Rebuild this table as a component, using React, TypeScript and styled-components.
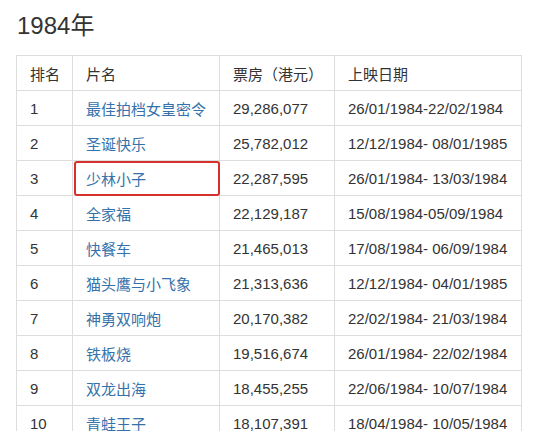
import styled, { createGlobalStyle } from 'styled-components'

const GlobalStyle = createGlobalStyle`
  html, body {
    margin: 0;
    background: #fff;
  }
  body {
    font-family: 'Liberation Sans', 'Noto Sans CJK SC', sans-serif;
    color: #333;
  }
`

const Page = styled.div`
  padding: 11px 0 0 16px;
  width: 525px;
  box-sizing: border-box;
`

const Title = styled.h2`
  margin: 0 0 14px 1px;
  font-size: 24px;
  line-height: 30px;
  font-weight: 400;
  color: #333;
`

const Table = styled.table`
  border-collapse: collapse;
  table-layout: fixed;
  width: 505px;
  font-size: 15px;
`

const Cell = styled.td`
  position: relative;
  height: 34px;
  padding: 0 0 0 13px;
  border: 1px solid #dddddd;
  vertical-align: middle;
  white-space: nowrap;
  color: #333;
  font-weight: 400;
  text-align: left;
`

const FilmLink = styled.a`
  color: #3572ab;
  text-decoration: none;
`

// red annotation box drawn over the highlighted cell
const Mark = styled.span`
  position: absolute;
  left: 1px;
  top: 0;
  right: -1px;
  bottom: -1px;
  border: 2.5px solid #d5302b;
  border-radius: 3px;
  pointer-events: none;
`

const films = [
  ['1', '最佳拍档女皇密令', '29,286,077', '26/01/1984-22/02/1984'],
  ['2', '圣诞快乐', '25,782,012', '12/12/1984- 08/01/1985'],
  ['3', '少林小子', '22,287,595', '26/01/1984- 13/03/1984'],
  ['4', '全家福', '22,129,187', '15/08/1984-05/09/1984'],
  ['5', '快餐车', '21,465,013', '17/08/1984- 06/09/1984'],
  ['6', '猫头鹰与小飞象', '21,313,636', '12/12/1984- 04/01/1985'],
  ['7', '神勇双响炮', '20,170,382', '22/02/1984- 21/03/1984'],
  ['8', '铁板烧', '19,516,674', '26/01/1984- 22/02/1984'],
  ['9', '双龙出海', '18,455,255', '22/06/1984- 10/07/1984'],
  ['10', '青蛙王子', '18,107,391', '18/04/1984- 10/05/1984'],
]

export default function App() {
  return (
    <Page>
      <GlobalStyle />
      <Title>1984年</Title>
      <Table>
        <colgroup>
          <col style={{ width: 56 }} />
          <col style={{ width: 147 }} />
          <col style={{ width: 115 }} />
          <col style={{ width: 187 }} />
        </colgroup>
        <thead>
          <tr>
            <Cell as="th">排名</Cell>
            <Cell as="th">片名</Cell>
            <Cell as="th">票房（港元）</Cell>
            <Cell as="th">上映日期</Cell>
          </tr>
        </thead>
        <tbody>
          {films.map(([rank, name, gross, dates]) => (
            <tr key={rank}>
              <Cell>{rank}</Cell>
              <Cell>
                <FilmLink href="#">{name}</FilmLink>
                {name === '少林小子' && <Mark />}
              </Cell>
              <Cell>{gross}</Cell>
              <Cell>{dates}</Cell>
            </tr>
          ))}
        </tbody>
      </Table>
    </Page>
  )
}
